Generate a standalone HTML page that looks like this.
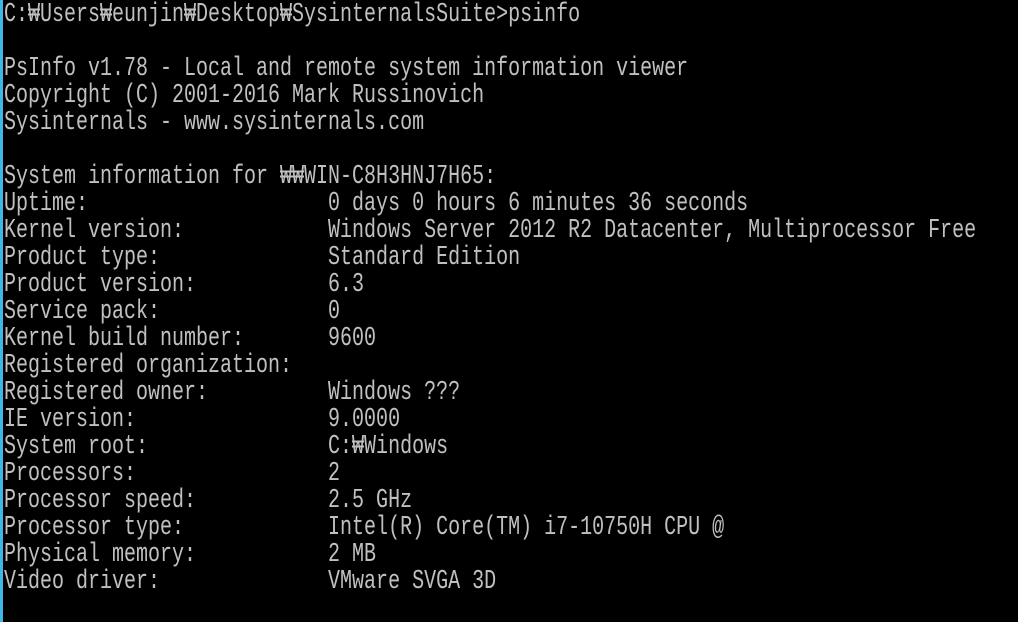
<!DOCTYPE html>
<html><head><meta charset="utf-8"><style>
html,body{margin:0;padding:0;background:#000;width:1018px;height:622px;overflow:hidden}
.strip{position:absolute;left:0;top:0;width:3px;height:622px;background:#3fb6e6}
pre{position:absolute;left:4px;top:2px;margin:0;font-family:"Liberation Mono","Noto Sans CJK KR",monospace;font-size:20px;line-height:20px;color:#c0c0c0;transform:scaleY(1.35);transform-origin:0 0;white-space:pre}
</style></head><body>
<div class="strip"></div>
<pre>C:₩Users₩eunjin₩Desktop₩SysinternalsSuite&gt;psinfo

PsInfo v1.78 - Local and remote system information viewer
Copyright (C) 2001-2016 Mark Russinovich
Sysinternals - www.sysinternals.com

System information for ₩₩WIN-C8H3HNJ7H65:
Uptime:                    0 days 0 hours 6 minutes 36 seconds
Kernel version:            Windows Server 2012 R2 Datacenter, Multiprocessor Free
Product type:              Standard Edition
Product version:           6.3
Service pack:              0
Kernel build number:       9600
Registered organization:
Registered owner:          Windows ???
IE version:                9.0000
System root:               C:₩Windows
Processors:                2
Processor speed:           2.5 GHz
Processor type:            Intel(R) Core(TM) i7-10750H CPU @
Physical memory:           2 MB
Video driver:              VMware SVGA 3D</pre>
</body></html>
